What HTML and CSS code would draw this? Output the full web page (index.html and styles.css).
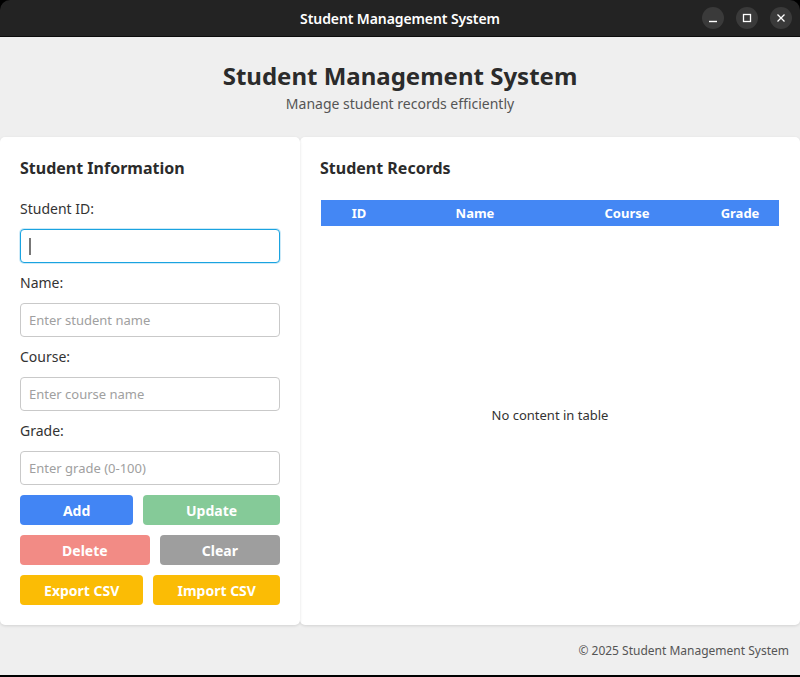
FILE: index.html
```html
<!DOCTYPE html>
<html lang="en">
<head>
<meta charset="utf-8">
<title>Student Management System</title>
<link rel="stylesheet" href="styles.css">
</head>
<body>
<div class="window">
  <div class="titlebar">
    <div class="titlebar-title">Student Management System</div>
    <div class="wm-buttons">
      <span class="wm-btn"><svg width="10" height="10" viewBox="0 0 10 10"><line x1="1" y1="8.5" x2="9" y2="8.5" stroke="#fff" stroke-width="1.4"/></svg></span>
      <span class="wm-btn"><svg width="10" height="10" viewBox="0 0 10 10"><rect x="1.5" y="1.5" width="7" height="7" fill="none" stroke="#fff" stroke-width="1.3"/></svg></span>
      <span class="wm-btn"><svg width="10" height="10" viewBox="0 0 10 10"><path d="M1.5 1.5 L8.5 8.5 M8.5 1.5 L1.5 8.5" stroke="#fff" stroke-width="1.3"/></svg></span>
    </div>
  </div>
  <div class="app">
    <header class="header">
      <h1 class="app-title">Student Management System</h1>
      <p class="app-subtitle">Manage student records efficiently</p>
    </header>
    <div class="content">
      <section class="panel panel-left">
        <h2 class="panel-title">Student Information</h2>
        <div class="form">
          <label class="field-label">Student ID:</label>
          <div class="input input-focused"><span class="caret"></span></div>
          <label class="field-label">Name:</label>
          <div class="input"><span class="placeholder">Enter student name</span></div>
          <label class="field-label">Course:</label>
          <div class="input"><span class="placeholder">Enter course name</span></div>
          <label class="field-label">Grade:</label>
          <div class="input"><span class="placeholder">Enter grade (0-100)</span></div>
        </div>
        <div class="btn-row">
          <button class="btn btn-blue">Add</button>
          <button class="btn btn-green">Update</button>
        </div>
        <div class="btn-row">
          <button class="btn btn-red">Delete</button>
          <button class="btn btn-grey">Clear</button>
        </div>
        <div class="btn-row">
          <button class="btn btn-yellow">Export CSV</button>
          <button class="btn btn-yellow">Import CSV</button>
        </div>
      </section>
      <section class="panel panel-right">
        <h2 class="panel-title">Student Records</h2>
        <div class="table">
          <div class="table-head">
            <div class="th th-id">ID</div>
            <div class="th th-name">Name</div>
            <div class="th th-course">Course</div>
            <div class="th th-grade">Grade</div>
          </div>
          <div class="table-body">No content in table</div>
        </div>
      </section>
    </div>
    <footer class="footer">© 2025 Student Management System</footer>
  </div>
</div>
</body>
</html>
```
FILE: styles.css
```css
* { box-sizing: border-box; }
html, body { margin: 0; padding: 0; background: #ffffff; }
body { font-family: "Noto Sans", "Open Sans", sans-serif; color: #333; }

.window {
  width: 800px;
  height: 677px;
  display: flex;
  flex-direction: column;
  background: #000;
}

.titlebar {
  height: 37px;
  flex: none;
  background: #232323;
  border-bottom: 1px solid #0c0c0c;
  border-radius: 10px 10px 0 0;
  display: flex;
  align-items: center;
  justify-content: center;
  position: relative;
}
.titlebar-title {
  color: #ffffff;
  font-size: 14px;
  font-weight: 600;
  letter-spacing: -0.1px;
}
.wm-buttons {
  position: absolute;
  right: 8px;
  top: 7px;
  display: flex;
  gap: 12px;
}
.wm-btn {
  width: 22px;
  height: 22px;
  border-radius: 50%;
  background: #3a3a3a;
  display: flex;
  align-items: center;
  justify-content: center;
}

.app {
  flex: 1;
  background: #efefef;
  display: flex;
  flex-direction: column;
  margin-bottom: 2px;
}

.header {
  height: 100px;
  flex: none;
  display: flex;
  flex-direction: column;
  align-items: center;
  padding-top: 24px;
}
.app-title {
  margin: 0;
  font-size: 24px;
  line-height: 30px;
  font-weight: 700;
  color: #2b2b2b;
}
.app-subtitle {
  margin: 0;
  font-size: 14px;
  line-height: 20px;
  color: #555;
  margin-top: 3px;
}

.content {
  height: 488px;
  flex: none;
  display: flex;
}
.panel {
  background: #ffffff;
  border-radius: 5px;
  padding: 20px;
  box-shadow: 0 1px 3px rgba(0,0,0,0.12);
}
.panel-left { width: 300px; position: relative; z-index: 1; }
.panel-right { flex: 1; display: flex; flex-direction: column; }

.panel-title {
  margin: 0;
  font-size: 16px;
  line-height: 22px;
  font-weight: 700;
  color: #2b2b2b;
}

.form { display: flex; flex-direction: column; margin-top: 20px; }
.field-label {
  font-size: 14px;
  line-height: 20px;
  color: #333;
  margin-bottom: 10px;
}
.input {
  height: 34px;
  border: 1px solid #c9c9c9;
  border-radius: 4px;
  background: #fff;
  margin-bottom: 10px;
  display: flex;
  align-items: center;
  padding-left: 8px;
}
.input-focused {
  border: 1.5px solid #1aa3e0;
  box-shadow: 0 0 0 1px #cdeaf8;
}
.caret {
  width: 1.5px;
  height: 17px;
  background: #777;
}
.placeholder {
  font-size: 13px;
  color: #a0a0a0;
}

.btn-row {
  display: flex;
  gap: 10px;
  margin-bottom: 10px;
}
.btn-row:last-child { margin-bottom: 0; }
.btn {
  flex: 1 1 auto;
  height: 30px;
  border: none;
  border-radius: 4px;
  font-family: "Noto Sans", "Open Sans", sans-serif;
  font-size: 14px;
  font-weight: 700;
  color: #ffffff;
  padding: 0 10px;
}
.btn-blue { background: #4285f4; }
.btn-green { background: #85ca98; }
.btn-red { background: #f28b85; }
.btn-grey { background: #9e9e9e; }
.btn-yellow { background: #fbbc05; }

.table {
  margin-top: 21px;
  flex: 1;
  display: flex;
  flex-direction: column;
  border: 1px solid #ffffff;
  border-top: none;
}
.table-head {
  display: flex;
  height: 26px;
  background: #4487f4;
  color: #fff;
  font-size: 13px;
  font-weight: 700;
}
.th { display: flex; align-items: center; justify-content: center; }
.th-id { width: 76px; }
.th-name { width: 156px; }
.th-course { width: 148px; }
.th-grade { flex: 1; }
.table-body {
  flex: 1;
  display: flex;
  align-items: center;
  justify-content: center;
  font-size: 13px;
  color: #333;
}

.footer {
  flex: 1;
  display: flex;
  align-items: center;
  justify-content: flex-end;
  padding-right: 11px;
  font-size: 12px;
  color: #555;
  padding-top: 1px;
}
```
